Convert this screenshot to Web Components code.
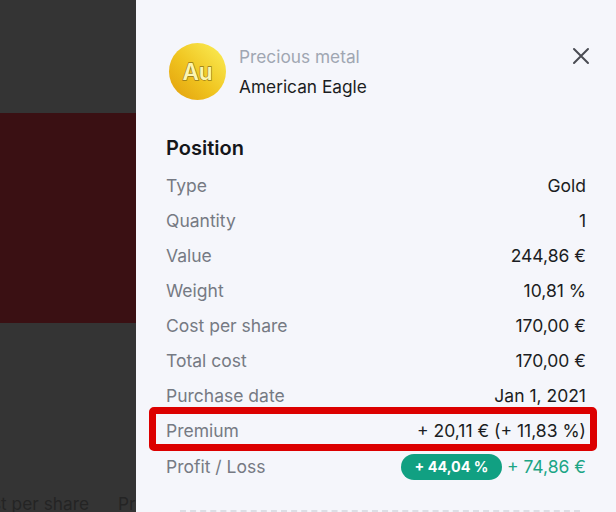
<!DOCTYPE html>
<html>
<head>
<meta charset="utf-8">
<style>
  html, body { margin: 0; padding: 0; height: 100%; overflow: hidden; }
  body { font-family: Inter, "Liberation Sans", sans-serif; background: #333; }
</style>
</head>
<body>
<template id="backdrop-tpl">
  <style>
    :host {
      display: flex;
      flex-direction: column;
      width: 136px;
      flex: none;
      height: 512px;
      overflow: hidden;
      background: #343434;
    }
    .top { height: 113px; }
    .band { height: 210px; background: #3a1013; }
    .rest { flex: 1; display: flex; flex-direction: column; justify-content: flex-end; }
    .labels {
      display: flex;
      gap: 29px;
      white-space: nowrap;
      font-size: 17.3px;
      line-height: 20px;
      color: #242424;
      margin: 0 0 -2px -31px;
    }
  </style>
  <div class="top"></div>
  <div class="band"></div>
  <div class="rest">
    <div class="labels"><span>Cost per share</span><span>Price</span></div>
  </div>
</template>

<template id="coin-tpl">
  <style>
    :host {
      display: flex;
      align-items: center;
      justify-content: center;
      flex: none;
      width: 57px;
      height: 57px;
      border-radius: 50%;
      background: linear-gradient(to bottom left, #f9e84f 10%, #f0c41f 55%, #e3a20e 95%);
    }
    span {
      font-size: 22.5px;
      font-weight: 600;
      color: #fcf5b0;
      -webkit-text-stroke: 1.3px #94781a;
      paint-order: stroke fill;
    }
  </style>
  <span><slot></slot></span>
</template>

<template id="row-tpl">
  <style>
    :host {
      display: flex;
      justify-content: space-between;
      align-items: center;
      height: 35px;
      font-size: 17.5px;
      color: #1b1d22;
      white-space: nowrap;
    }
    .label { color: #767a83; }
    .value { display: flex; align-items: center; gap: 5px; }
    :host([tone="up"]) .value { color: #1ba585; }
  </style>
  <span class="label"><slot name="label"></slot></span>
  <span class="value"><slot></slot></span>
</template>

<template id="pill-tpl">
  <style>
    :host {
      display: inline-flex;
      align-items: center;
      height: 26px;
      padding: 0 13.5px;
      border-radius: 13px;
      background: #11a082;
      color: #fff;
      font-size: 14.4px;
      font-weight: 700;
    }
  </style>
  <slot></slot>
</template>

<template id="panel-tpl">
  <style>
    :host {
      display: block;
      position: relative;
      flex: 1;
      height: 512px;
      box-sizing: border-box;
      padding: 43px 30px 0 30px;
      background: #f5f6fb;
      overflow: hidden;
    }
    header { display: flex; align-items: center; gap: 13px; padding-left: 3px; }
    .titles { display: flex; flex-direction: column; gap: 7px; flex: 1; font-size: 17.3px; line-height: 23px; }
    .kind { color: #a0a6b2; }
    .name { color: #1b1d22; }
    .close { display: block; align-self: flex-start; margin: 4px -4px 0 0; }
    h2 { margin: 36px 0 8px; font-size: 20px; line-height: 24px; font-weight: 600; color: #14161a; }
    .dash { position: absolute; left: 44px; right: 36px; top: 510px; border-top: 2px dashed #dcdee5; }
    .mark {
      position: absolute;
      left: 13px;
      top: 407px;
      width: 448px;
      height: 44px;
      box-sizing: border-box;
      border: 7px solid #dc0000;
      border-radius: 5px;
    }
  </style>
  <header>
    <metal-coin>Au</metal-coin>
    <div class="titles">
      <span class="kind"><slot name="kind"></slot></span>
      <span class="name"><slot name="name"></slot></span>
    </div>
    <svg class="close" width="18" height="18" viewBox="0 0 18 18" fill="none" stroke="#4a4c53" stroke-width="2" stroke-linecap="round"><path d="M2 2l14 14M16 2L2 16"/></svg>
  </header>
  <h2><slot name="heading"></slot></h2>
  <slot></slot>
  <div class="mark"></div>
  <div class="dash"></div>
</template>

<app-screen>
  <page-backdrop></page-backdrop>
  <detail-panel>
    <span slot="kind">Precious metal</span>
    <span slot="name">American Eagle</span>
    <span slot="heading">Position</span>
    <info-row><span slot="label">Type</span>Gold</info-row>
    <info-row><span slot="label">Quantity</span>1</info-row>
    <info-row><span slot="label">Value</span>244,86 €</info-row>
    <info-row><span slot="label">Weight</span>10,81 %</info-row>
    <info-row><span slot="label">Cost per share</span>170,00 €</info-row>
    <info-row><span slot="label">Total cost</span>170,00 €</info-row>
    <info-row><span slot="label">Purchase date</span>Jan 1, 2021</info-row>
    <info-row><span slot="label">Premium</span>+ 20,11 € (+ 11,83 %)</info-row>
    <info-row tone="up" style="margin-top:1px"><span slot="label">Profit / Loss</span><gain-pill>+ 44,04 %</gain-pill>+ 74,86 €</info-row>
  </detail-panel>
</app-screen>

<script>
  // every element just clones its template into an open shadow root
  function register(tag, tplId) {
    customElements.define(tag, class extends HTMLElement {
      constructor() {
        super();
        this.attachShadow({ mode: 'open' });
        this.shadowRoot.appendChild(document.getElementById(tplId).content.cloneNode(true));
      }
    });
  }

  class AppScreen extends HTMLElement {
    constructor() {
      super();
      this.attachShadow({ mode: 'open' });
      this.shadowRoot.innerHTML = `
        <style>
          :host { display: flex; width: 616px; height: 512px; overflow: hidden; }
        </style>
        <slot></slot>
      `;
    }
  }

  customElements.define('app-screen', AppScreen);
  register('page-backdrop', 'backdrop-tpl');
  register('metal-coin', 'coin-tpl');
  register('info-row', 'row-tpl');
  register('gain-pill', 'pill-tpl');
  register('detail-panel', 'panel-tpl');
</script>
</body>
</html>
